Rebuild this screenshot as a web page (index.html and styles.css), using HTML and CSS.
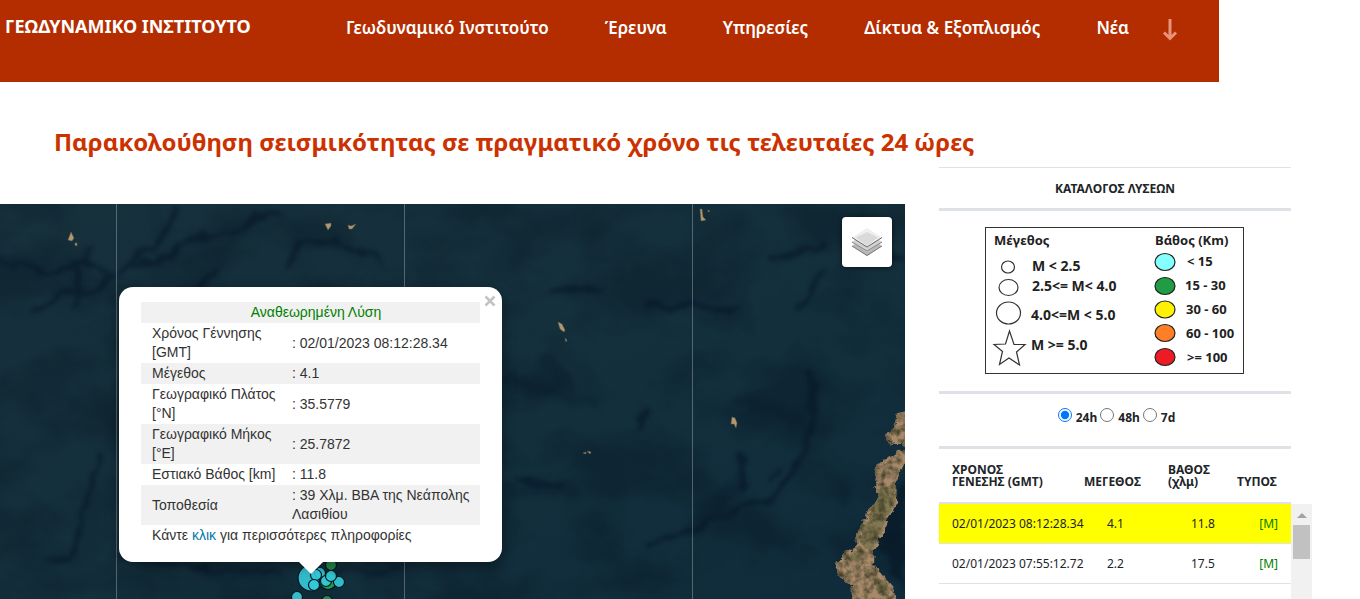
FILE: index.html
```html
<!DOCTYPE html>
<html lang="el">
<head>
<meta charset="utf-8">
<title>Γεωδυναμικό Ινστιτούτο</title>
<link rel="stylesheet" href="styles.css">
</head>
<body>
<header class="site-header">
  <a class="brand" href="#">ΓΕΩΔΥΝΑΜΙΚΟ ΙΝΣΤΙΤΟΥΤΟ</a>
  <nav class="nav">
    <a href="#">Γεωδυναμικό Ινστιτούτο</a>
    <a href="#">Έρευνα</a>
    <a href="#">Υπηρεσίες</a>
    <a href="#">Δίκτυα &amp; Εξοπλισμός</a>
    <a href="#">Νέα</a>
  </nav>
  <button class="more" type="button" aria-label="Περισσότερα">
    <svg width="18" height="26" viewBox="0 0 18 26"><path d="M9 3V22M3 16.500L9 22.500L15 16.500" fill="none" stroke="#e89478" stroke-width="3"/></svg>
  </button>
</header>

<h1 class="title">Παρακολούθηση σεισμικότητας σε πραγματικό χρόνο τις τελευταίες 24 ώρες</h1>

<main class="content">
  <section class="map">
    <svg class="map-canvas" viewBox="0 204 905 395" preserveAspectRatio="xMinYMin slice" aria-hidden="true">
      <defs>
        <filter id="sea" x="0" y="0" width="100%" height="100%" color-interpolation-filters="sRGB">
          <feTurbulence type="fractalNoise" baseFrequency="0.012 0.016" numOctaves="5" seed="8"/>
          <feColorMatrix values="0 0 0 0 0.02  0 0 0 0 0.07  0 0 0 0 0.12  3 0 0 0 -1.200"/>
        </filter>
        <filter id="soft" x="-20%" y="-50%" width="140%" height="200%" color-interpolation-filters="sRGB">
          <feTurbulence type="fractalNoise" baseFrequency="0.05" numOctaves="3" seed="3" result="n"/>
          <feDisplacementMap in="SourceGraphic" in2="n" scale="16" xChannelSelector="R" yChannelSelector="G"/>
          <feGaussianBlur stdDeviation="2"/>
        </filter>
        <filter id="terrain" x="-5%" y="-5%" width="110%" height="110%" color-interpolation-filters="sRGB">
          <feTurbulence type="fractalNoise" baseFrequency="0.14" numOctaves="4" seed="5" result="n"/>
          <feDisplacementMap in="SourceGraphic" in2="n" scale="8" xChannelSelector="R" yChannelSelector="G" result="shape"/>
          <feColorMatrix in="n" values="0 0 0 0 0.25  0 0 0 0 0.24  0 0 0 0 0.15  2 0 0 0 -0.700" result="shade"/>
          <feComposite in="shade" in2="shape" operator="in" result="tex"/>
          <feMerge><feMergeNode in="shape"/><feMergeNode in="tex"/></feMerge>
        </filter>
        <linearGradient id="depth" x1="0" y1="0" x2="1" y2="1">
          <stop offset="0" stop-color="#16303c"/>
          <stop offset="0.500" stop-color="#14303c"/>
          <stop offset="1" stop-color="#102c3c"/>
        </linearGradient>
      </defs>
      <rect y="204" width="905" height="395" fill="url(#depth)"/>
      <rect y="204" width="905" height="395" filter="url(#sea)" opacity="0.300"/>
      <g filter="url(#soft)" fill="none" stroke="#07172a" stroke-linecap="round" opacity="0.650">
        <path stroke-width="5" d="M178 210L160 240L135 258L112 275L80 262L45 272L0 260M275 212L225 232L190 240L170 258L135 264M112 275L95 290L60 295L35 315M86 250L80 270L75 310M215 270L200 285M340 242L300 242L292 265M340 244L380 258"/>
        <path stroke-width="4" d="M102 455L90 485L80 530L70 560L45 560M118 555L200 568L280 575M330 575L400 568"/>
        <path stroke-width="6" d="M555 288L600 288M650 305L740 307M770 258L825 245M820 270L800 310M650 410L636 425M812 370L815 420L803 455L770 500L720 515L650 545M780 470L770 480M520 480L560 485M740 455L745 490M860 220L880 250L905 260"/>
      </g>
      <g filter="url(#soft)" fill="none" stroke="#07172a" stroke-linecap="round" opacity="0.250">
        <path stroke-width="14" d="M545 360L580 400M510 380L590 400M505 490L570 490M840 490L846 500M740 480L690 530M740 400L800 420"/>
      </g>
      <path filter="url(#soft)" d="M905 480L890 510L878 545L905 590Z" fill="#081826" opacity="0.700"/>
      <g fill="#b29870" stroke="#655d48" stroke-width="0.500">
        <path d="M71 232l3 6-2 3-4-1zM75 243l2 0 0 3-2-1zM325 224l6-1 0 3-3 4zM348 225l3 1 5-2-4 5-3 0zM558 322l4 2 3 6-1 2-4-3zM565 338l2 2-1 2zM732 417l3 1 2 5-1 5-2-4-3 0zM583 453l3-1 0 2zM587 451l4 1-1 2zM700 209l2 0 1 8 3 3-5 1zM708 210l2 1-2 1z"/>
      </g>
      <g filter="url(#terrain)">
        <path fill="#a88a6b" d="M912 410L897 413L894 428L884 434L893 444L902 444L912 448ZM912 451L898 450L896 454L890 457L879 462L876 470L875 492L879 496L865 516L862 526L856 534L857 544L845 553L834 565L842 579L852 585L851 610L898 610L893 586L883 575L873 564L874 549L884 532L888 518L896 504L897 480L902 465L912 455Z"/>
        <path fill="#706f47" opacity="0.700" d="M879 492L894 480L894 504L884 520L880 534L870 550L860 545L862 528L870 512ZM851 550L862 552L858 562L845 562ZM875 579L887 583L888 596L875 592ZM844 567L852 572L848 578Z"/>
      </g>
      <path d="M116.500 204V599M404.500 204V599M692.500 204V599" stroke="#ffffff" stroke-opacity="0.280"/>
      <g stroke="#05161d" stroke-width="1.200" fill-opacity="0.900">
        <circle cx="311" cy="578" r="13" fill="#35cbdc"/>
        <circle cx="331" cy="565" r="5.500" fill="#27904e"/>
        <circle cx="328" cy="581" r="8.500" fill="#27a353"/>
        <circle cx="320" cy="573" r="5.500" fill="#35cbdc"/>
        <circle cx="339" cy="582" r="5.500" fill="#35cbdc"/>
        <circle cx="326" cy="581" r="5.500" fill="#35cbdc"/>
        <circle cx="331" cy="576" r="5.500" fill="#35cbdc"/>
        <circle cx="316" cy="575" r="5.500" fill="#35cbdc"/>
        <circle cx="314" cy="585" r="5.500" fill="#35cbdc"/>
        <circle cx="297" cy="597" r="5.500" fill="#35cbdc"/>
        <circle cx="327" cy="601" r="5.500" fill="#27904e"/>
      </g>
    </svg>

    <button class="layers" type="button" aria-label="Επίπεδα χάρτη">
      <svg width="30" height="28" viewBox="0 0 30 28">
        <path d="M0 18L15 8L30 18L15 28Z" fill="#b8b8b8"/><path d="M0 18L15 27.500L30 18" fill="none" stroke="#777"/>
        <path d="M0 14L15 4L30 14L15 24Z" fill="#d2d2d2"/><path d="M0 14L15 23L30 14" fill="none" stroke="#858585"/>
        <path d="M0 9.500L15 0L30 9.500L15 19Z" fill="#efefef"/><path d="M4 9.500L15 4L26 9.500L15 18Z" fill="#dadada"/><path d="M0 9.500L15 19L30 9.500" fill="none" stroke="#666"/>
      </svg>
    </button>

    <div class="popup">
      <button class="popup-close" type="button" aria-label="Κλείσιμο"><svg width="12" height="12" viewBox="0 0 12 12"><path d="M1.500 1.500L10.500 10.500M10.500 1.500L1.500 10.500" stroke="#c3c3c3" stroke-width="2.600"/></svg></button>
      <table class="details">
        <colgroup><col class="details-label"><col></colgroup>
        <tr><td class="status" colspan="2">Αναθεωρημένη Λύση</td></tr>
        <tr><td>Χρόνος Γέννησης [GMT]</td><td>: 02/01/2023 08:12:28.34</td></tr>
        <tr><td>Μέγεθος</td><td>: 4.1</td></tr>
        <tr><td>Γεωγραφικό Πλάτος [°N]</td><td>: 35.5779</td></tr>
        <tr><td>Γεωγραφικό Μήκος [°E]</td><td>: 25.7872</td></tr>
        <tr><td>Εστιακό Βάθος [km]</td><td>: 11.8</td></tr>
        <tr><td>Τοποθεσία</td><td>: 39 Χλμ. ΒΒΑ της Νεάπολης Λασιθίου</td></tr>
        <tr><td colspan="2">Κάντε <a href="#">κλικ</a> για περισσότερες πληροφορίες</td></tr>
      </table>
    </div>
  </section>

  <aside class="catalog">
    <h2 class="catalog-title">ΚΑΤΑΛΟΓΟΣ ΛΥΣΕΩΝ</h2>
    <div class="legend">
      <svg width="259" height="147" viewBox="0 0 259 147" role="img" aria-label="Υπόμνημα">
        <rect x="0.500" y="0.500" width="258" height="146" fill="#fff" stroke="#333"/>
        <g fill="#fff" stroke="#333" stroke-width="1.200">
          <ellipse cx="23" cy="40" rx="6.500" ry="6"/>
          <ellipse cx="23.500" cy="60.500" rx="9.500" ry="8"/>
          <ellipse cx="23.500" cy="86" rx="12" ry="11"/>
          <path d="M24.500 104L29 117.500L40 117.500L31.500 125L34.500 138L24 131L14.500 137.500L17.500 124.500L9 117.500L20.500 117Z"/>
        </g>
        <g stroke="#222" stroke-width="1.200">
          <ellipse cx="180" cy="35" rx="10" ry="8.500" fill="#86ffff"/>
          <ellipse cx="180" cy="59" rx="10" ry="8.500" fill="#1f9c44"/>
          <ellipse cx="180" cy="82.500" rx="10" ry="8.500" fill="#fff200"/>
          <ellipse cx="180" cy="106" rx="10" ry="8.500" fill="#ff7f27"/>
          <ellipse cx="180" cy="130" rx="10" ry="8.500" fill="#ed1c24"/>
        </g>
        <g class="legend-text">
          <text x="9" y="18">Μέγεθος</text>
          <g class="magnitudes">
            <text x="47" y="44">M &lt; 2.5</text>
            <text x="47" y="64">2.5&lt;= M&lt; 4.0</text>
            <text x="46" y="93">4.0&lt;=M &lt; 5.0</text>
            <text x="46" y="123">M &gt;= 5.0</text>
          </g>
          <text x="170" y="18">Βάθος (Km)</text>
          <text x="202" y="39">&lt; 15</text>
          <text x="200" y="63">15 - 30</text>
          <text x="201" y="87">30 - 60</text>
          <text x="201" y="111">60 - 100</text>
          <text x="202" y="135">&gt;= 100</text>
        </g>
      </svg>
    </div>
    <form class="period">
      <input type="radio" name="period" id="p24" checked><label for="p24">24h</label>
      <input type="radio" name="period" id="p48"><label for="p48">48h</label>
      <input type="radio" name="period" id="p7"><label for="p7">7d</label>
    </form>
    <div class="events-wrap">
      <table class="events">
        <thead><tr><th class="time">ΧΡΟΝΟΣ ΓΕΝΕΣΗΣ (GMT)</th><th class="mag">ΜΕΓΕΘΟΣ</th><th class="dep">ΒΑΘΟΣ (χλμ)</th><th class="type">ΤΥΠΟΣ</th></tr></thead>
        <tbody>
          <tr class="selected"><td>02/01/2023 08:12:28.34</td><td class="mag-value">4.1</td><td class="dep-value">11.8</td><td class="type-value"><a href="#">[M]</a></td></tr>
          <tr><td>02/01/2023 07:55:12.72</td><td class="mag-value">2.2</td><td class="dep-value">17.5</td><td class="type-value"><a href="#">[M]</a></td></tr>
        </tbody>
      </table>
      <div class="scrollbar"><span class="scroll-up"></span><span class="scroll-thumb"></span></div>
    </div>
  </aside>
</main>
</body>
</html>
```
FILE: styles.css
```css
* { box-sizing: border-box; }
body {
  margin: 0;
  min-height: 100vh;
  display: flex;
  flex-direction: column;
  background: #fff;
  color: #212529;
  font-family: "Noto Sans", "Open Sans", sans-serif;
}
a { text-decoration: none; }
button { border: 0; padding: 0; background: none; cursor: pointer; }

.site-header {
  display: flex;
  align-items: flex-start;
  height: 82px;
  margin-right: 141px;
  padding: 14px 40px 0 5px;
  background: #b32d00;
}
.brand {
  flex: 0 0 341px;
  color: #fff;
  font: 700 18px/24px "Noto Sans", sans-serif;
}
.nav {
  display: flex;
  flex: 1;
  justify-content: space-between;
  white-space: nowrap;
}
.nav a { color: #fff; font-size: 17px; font-weight: 600; line-height: 28px; }
.more { margin-left: 32px; height: 30px; }
.more svg { display: block; }

.title {
  margin: 0;
  height: 85px;
  padding: 43px 0 0 54px;
  color: #cc3100;
  font-size: 24px;
  font-weight: 700;
  line-height: 34px;
  white-space: nowrap;
}

.content {
  flex: 1;
  display: grid;
  grid-template-columns: minmax(0, 1fr) 373px;
  gap: 34px;
  padding-right: 48px;
}

.map {
  position: relative;
  overflow: hidden;
  margin-top: 37px;
  background: #122d3b;
}
.map-canvas { position: absolute; inset: 0; width: 100%; height: 100%; }
.layers {
  position: absolute;
  top: 13px;
  right: 13px;
  display: grid;
  place-items: center;
  width: 50px;
  height: 50px;
  border-radius: 4px;
  background: #fff;
  box-shadow: 0 1px 5px rgba(0, 0, 0, 0.6);
}
.popup {
  position: absolute;
  top: 83px;
  left: 119px;
  width: 383px;
  padding: 15px 22px 16px;
  border-radius: 14px;
  background: #fff;
  box-shadow: 0 3px 14px rgba(0, 0, 0, 0.4);
  color: #333;
  font: 14px/19px "Liberation Sans", Arial, sans-serif;
}
.popup::after {
  content: "";
  position: absolute;
  top: 100%;
  left: 180px;
  border: 12px solid transparent;
  border-top-color: #fff;
  border-bottom: 0;
}
.popup-close { position: absolute; top: 8px; right: 6px; }
.popup-close svg { display: block; }
.details { width: 100%; border-collapse: collapse; table-layout: fixed; }
.details-label { width: 140px; }
.details td { padding: 1px 0 1px 11px; vertical-align: middle; }
.details tr:nth-child(odd) { background: #f1f1f1; }
.details .status { color: #008000; text-align: center; }
.details a { color: #0078a8; }

.catalog { font-size: 12px; }
.catalog-title, .legend, .period, .events { width: 352px; }
.catalog-title {
  margin: 0;
  padding: 12px 0 11px;
  border-top: 1px solid #dee2e6;
  border-bottom: 3px solid #dee2e6;
  font-size: 12px;
  font-weight: 700;
  line-height: 17px;
  text-align: center;
}
.legend { padding: 16px 0 17px 46px; border-bottom: 3px solid #dee2e6; }
.legend svg { display: block; }
.legend-text { font: 700 13px "Noto Sans", sans-serif; fill: #222; }
.magnitudes { font-size: 14px; }
.period {
  display: flex;
  justify-content: center;
  align-items: center;
  height: 55px;
  padding-bottom: 10px;
  border-bottom: 3px solid #dee2e6;
  font-weight: 700;
}
.period input { width: 14px; height: 14px; margin: 0 4px 0 3px; }
.period label { padding-top: 4px; }
.events-wrap { display: flex; align-items: flex-start; }
.events { flex: none; border-collapse: separate; border-spacing: 0; table-layout: fixed; }
.events th {
  height: 55px;
  padding: 0 0 14px;
  border-bottom: 2px solid #dee2e6;
  font-weight: 700;
  line-height: 12px;
  text-align: left;
  vertical-align: bottom;
}
.events .time { width: 145px; padding-left: 13px; padding-right: 30px; }
.events .mag { width: 84px; }
.events .dep { width: 69px; padding-right: 20px; }
.events .type { width: 54px; }
.events td {
  height: 40px;
  padding: 0;
  border-bottom: 1px solid #dee2e6;
  line-height: 18px;
  white-space: nowrap;
}
.events td:first-child { padding-left: 13px; }
.events .selected td { background: #ff0; }
.events .mag-value { padding-left: 23px; }
.events .dep-value { padding-left: 23px; }
.events .type-value { padding-right: 13px; text-align: right; }
.events a { color: #008000; }
.scrollbar {
  flex: 1;
  display: flex;
  flex-direction: column;
  align-items: center;
  gap: 7px;
  min-height: 95px;
  margin-top: 55px;
  padding-top: 9px;
  background: #f1f1f1;
}
.scroll-up { border: 5px solid transparent; border-top: 0; border-bottom-color: #a3a3a3; }
.scroll-thumb { width: 17px; height: 34px; background: #c1c1c1; }
```
